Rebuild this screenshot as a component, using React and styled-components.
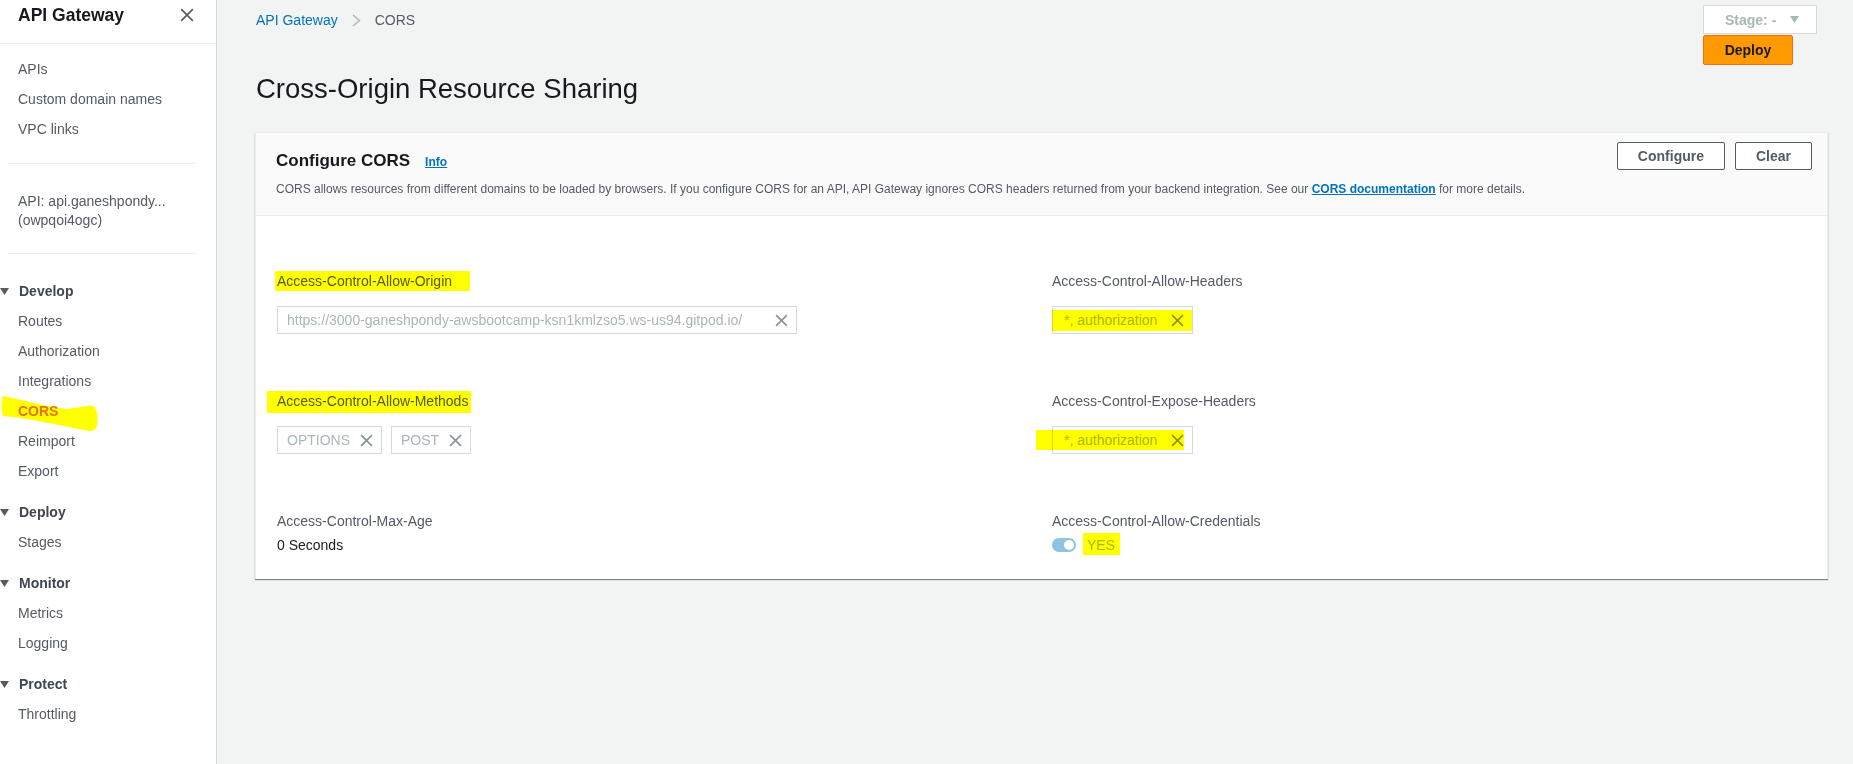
import React from 'react'
import styled, { createGlobalStyle } from 'styled-components'

const GlobalStyle = createGlobalStyle`
  html, body {
    margin: 0;
    padding: 0;
  }
  body {
    font-family: "Liberation Sans", Arial, sans-serif;
    background: #f2f3f3;
    color: #16191f;
  }
`

const Page = styled.div`
  display: flex;
  min-height: 100vh;
`

/* ---------- sidebar ---------- */

const Sidebar = styled.nav`
  width: 216px;
  flex: none;
  background: #fff;
  border-right: 1px solid #d5dbdb;
`

const SideHeader = styled.div`
  height: 44px;
  box-sizing: border-box;
  display: flex;
  justify-content: space-between;
  align-items: flex-start;
  padding: 4px 22px 0 18px;
  border-bottom: 1px solid #eaeded;
`

const SideTitle = styled.h1`
  margin: 0;
  font-size: 17.5px;
  line-height: 22px;
  font-weight: 700;
  color: #16191f;
`

const CloseBtn = styled.span`
  display: flex;
  margin-top: 4px;
`

const NavGroup = styled.div`
  padding-top: 10px;
`

const NavItem = styled.div`
  position: relative;
  line-height: 30px;
  padding-left: 18px;
  font-size: 14px;
  color: ${p => (p.$active ? '#ec7211' : '#545b64')};
  font-weight: ${p => (p.$active ? 700 : 400)};
`

const Divider = styled.div`
  height: 1px;
  background: #eaeded;
  margin: ${p => p.$top}px 20px 0 8px;
`

const ApiName = styled.div`
  margin-top: 28px;
  padding-left: 18px;
  font-size: 14px;
  line-height: 19px;
  color: #545b64;
`

const Sections = styled.div`
  padding-top: 11px;
`

const Section = styled.div`
  margin-top: 11px;
`

const SectionHeader = styled.div`
  display: flex;
  align-items: center;
  line-height: 30px;
  font-size: 14px;
  font-weight: 700;
  color: #414750;

  svg {
    margin: 0 10px 0 0;
  }
`

const Stroke = styled.svg`
  position: absolute;
  left: 0;
  top: 0;
  mix-blend-mode: multiply;
  pointer-events: none;
`

/* ---------- main ---------- */

const Main = styled.main`
  flex: 1;
  padding: 5px 25px 40px 38px;
  min-width: 0;
`

const TopBar = styled.div`
  display: flex;
  justify-content: space-between;
  align-items: flex-start;
`

const Breadcrumb = styled.div`
  display: flex;
  align-items: center;
  padding: 6px 0 0 1px;
  font-size: 14px;
  line-height: 18px;
`

const Crumb = styled.span`
  color: ${p => (p.$link ? '#0073bb' : '#545b64')};
`

const Chevron = styled.span`
  display: flex;
  margin: 0 14px;
`

const Actions = styled.div`
  display: flex;
  flex-direction: column;
  align-items: flex-start;
  margin-right: 11px;
`

const StageSelect = styled.div`
  width: 114px;
  height: 29px;
  box-sizing: border-box;
  display: flex;
  align-items: center;
  justify-content: space-between;
  padding: 0 17px 0 21px;
  background: #fff;
  border: 1px solid #d5dbdb;
  font-size: 14px;
  font-weight: 700;
  color: #aab7b8;
`

const DeployBtn = styled.button`
  width: 90px;
  height: 30px;
  margin-top: 1px;
  background: #ff9900;
  border: 1px solid #ec7211;
  border-radius: 2px;
  font-family: inherit;
  font-size: 14px;
  font-weight: 700;
  color: #16191f;
  padding: 0;
`

const Title = styled.h1`
  margin: 6px 0 0 1px;
  font-size: 27.5px;
  line-height: 36px;
  font-weight: 400;
  color: #16191f;
`

const Card = styled.section`
  margin-top: 25px;
  background: #fff;
  border: 1px solid #eaeded;
  border-bottom: none;
  box-shadow: 0 1px 1px 0 rgba(0, 28, 36, 0.5);
`

const CardHeader = styled.header`
  background: #fafafa;
  border-bottom: 1px solid #eaeded;
  padding: 9px 15px 18px 20px;
`

const TitleRow = styled.div`
  display: flex;
  justify-content: space-between;
  align-items: flex-start;
`

const CardTitle = styled.h2`
  margin: 8px 0 0;
  font-size: 17px;
  line-height: 22px;
  font-weight: 700;
  color: #16191f;
  display: flex;
  align-items: baseline;
`

const InfoLink = styled.a`
  margin-left: 15px;
  font-size: 12px;
  font-weight: 700;
  color: #0073bb;
  text-decoration: underline;
`

const Buttons = styled.div`
  display: flex;
  gap: 10px;
`

const Button = styled.button`
  height: 28px;
  padding: 0 20px;
  background: #fff;
  border: 1px solid #545b64;
  border-radius: 2px;
  font-family: inherit;
  font-size: 14px;
  font-weight: 700;
  color: #545b64;
`

const Description = styled.p`
  margin: 8px 0 0;
  font-size: 12px;
  line-height: 16px;
  color: #545b64;

  a {
    color: #0073bb;
    font-weight: 700;
    text-decoration: underline;
  }
`

const CardBody = styled.div`
  display: grid;
  grid-template-columns: 775px 1fr;
  row-gap: 57px;
  padding: 55px 21px 24px;
`

const Field = styled.div`
  display: flex;
  flex-direction: column;
  align-items: flex-start;
`

const Label = styled.div`
  font-size: 14px;
  line-height: 20px;
  color: #545b64;
`

const Controls = styled.div`
  display: flex;
  gap: 9px;
  margin-top: ${p => p.$gap}px;
`

const Chip = styled.div`
  height: 28px;
  box-sizing: border-box;
  display: flex;
  align-items: center;
  justify-content: space-between;
  gap: 10px;
  padding: 0 8px 0 ${p => p.$pl || 9}px;
  width: ${p => (p.$w ? `${p.$w}px` : 'auto')};
  background: #fff;
  border: 1px solid #d5dbdb;
  font-size: 14px;
  color: #aab7b8;
  white-space: nowrap;
`

const Value = styled.div`
  font-size: 14px;
  line-height: 20px;
  color: #16191f;
`

const ToggleRow = styled.div`
  display: flex;
  align-items: center;
  gap: 11px;
  margin-top: 4px;
  height: 20px;
`

const Toggle = styled.span`
  width: 24px;
  height: 14px;
  border-radius: 7px;
  background: #8fc3e4;
  display: flex;
  align-items: center;
  justify-content: flex-end;
  padding: 0 2px;
  box-sizing: border-box;

  &::after {
    content: '';
    width: 10px;
    height: 10px;
    border-radius: 50%;
    background: #fff;
  }
`

const Muted = styled.span`
  font-size: 14px;
  line-height: 20px;
  color: #aab7b8;
`

/* marker highlight painted over content */
const Mark = styled.span`
  position: relative;
  display: inline-flex;

  &::after {
    content: '';
    position: absolute;
    top: ${p => p.$t || 0}px;
    bottom: ${p => p.$b || 0}px;
    left: ${p => p.$l || 0}px;
    right: ${p => p.$r || 0}px;
    background: #ffff00;
    mix-blend-mode: multiply;
    pointer-events: none;
  }
`

const XIcon = ({ size = 13, color = '#879596', w = 1.5 }) => (
  <svg width={size} height={size} viewBox="0 0 12 12">
    <path d="M1 1 L11 11 M11 1 L1 11" stroke={color} strokeWidth={w} fill="none" />
  </svg>
)

const Caret = ({ color = '#545b64' }) => (
  <svg width="9" height="7" viewBox="0 0 9 7">
    <polygon points="0,0 9,0 4.5,7" fill={color} />
  </svg>
)

const sections = [
  { title: 'Develop', items: ['Routes', 'Authorization', 'Integrations', 'CORS', 'Reimport', 'Export'] },
  { title: 'Deploy', items: ['Stages'] },
  { title: 'Monitor', items: ['Metrics', 'Logging'] },
  { title: 'Protect', items: ['Throttling'] },
]

const App = () => {
  return (
    <Page>
      <GlobalStyle />
      <Sidebar>
        <SideHeader>
          <SideTitle>API Gateway</SideTitle>
          <CloseBtn>
            <XIcon size={14} color="#545b64" w={1.4} />
          </CloseBtn>
        </SideHeader>
        <NavGroup>
          <NavItem>APIs</NavItem>
          <NavItem>Custom domain names</NavItem>
          <NavItem>VPC links</NavItem>
        </NavGroup>
        <Divider $top={19} />
        <ApiName>
          API: api.ganeshpondy...
          <br />
          (owpqoi4ogc)
        </ApiName>
        <Divider $top={23} />
        <Sections>
          {sections.map(s => (
            <Section key={s.title}>
              <SectionHeader>
                <Caret />
                {s.title}
              </SectionHeader>
              {s.items.map(item =>
                item === 'CORS' ? (
                  <NavItem key={item} $active>
                    CORS
                    <Stroke width="100" height="40" viewBox="0 0 100 40">
                      <path
                        d="M3 0 C25 4 45 11 67 13 C78 12 88 9 93 10 C97 12 98 20 97 30 C96 34 93 35 90 35 C60 30 30 22 3 20 C1 15 1 5 3 0 Z"
                        fill="#ffff00"
                      />
                    </Stroke>
                  </NavItem>
                ) : (
                  <NavItem key={item}>{item}</NavItem>
                )
              )}
            </Section>
          ))}
        </Sections>
      </Sidebar>

      <Main>
        <TopBar>
          <Breadcrumb>
            <Crumb $link>API Gateway</Crumb>
            <Chevron>
              <svg width="9" height="13" viewBox="0 0 9 13">
                <path d="M1 1 L7.5 6.5 L1 12" stroke="#aab7b8" strokeWidth="1.5" fill="none" />
              </svg>
            </Chevron>
            <Crumb>CORS</Crumb>
          </Breadcrumb>
          <Actions>
            <StageSelect>
              Stage: -
              <Caret color="#aab7b8" />
            </StageSelect>
            <DeployBtn>Deploy</DeployBtn>
          </Actions>
        </TopBar>

        <Title>Cross-Origin Resource Sharing</Title>

        <Card>
          <CardHeader>
            <TitleRow>
              <CardTitle>
                Configure CORS
                <InfoLink>Info</InfoLink>
              </CardTitle>
              <Buttons>
                <Button>Configure</Button>
                <Button>Clear</Button>
              </Buttons>
            </TitleRow>
            <Description>
              CORS allows resources from different domains to be loaded by browsers. If you configure CORS for an API,
              API Gateway ignores CORS headers returned from your backend integration. See our{' '}
              <a>CORS documentation</a> for more details.
            </Description>
          </CardHeader>

          <CardBody>
            <Field>
              <Mark $l={-2} $r={-18}>
                <Label>Access-Control-Allow-Origin</Label>
              </Mark>
              <Controls $gap={15}>
                <Chip $w={520}>
                  https://3000-ganeshpondy-awsbootcamp-ksn1kmlzso5.ws-us94.gitpod.io/
                  <XIcon />
                </Chip>
              </Controls>
            </Field>
            <Field>
              <Label>Access-Control-Allow-Headers</Label>
              <Controls $gap={15}>
                <Mark $t={4} $b={3} $r={1}>
                  <Chip $w={141} $pl={11}>
                    *, authorization
                    <XIcon />
                  </Chip>
                </Mark>
              </Controls>
            </Field>

            <Field>
              <Mark $l={-10} $r={-3} $b={-2}>
                <Label>Access-Control-Allow-Methods</Label>
              </Mark>
              <Controls $gap={15}>
                <Chip>
                  OPTIONS
                  <XIcon />
                </Chip>
                <Chip>
                  POST
                  <XIcon />
                </Chip>
              </Controls>
            </Field>
            <Field>
              <Label>Access-Control-Expose-Headers</Label>
              <Controls $gap={15}>
                <Mark $t={4} $b={4} $l={-16} $r={9}>
                  <Chip $w={141} $pl={11}>
                    *, authorization
                    <XIcon />
                  </Chip>
                </Mark>
              </Controls>
            </Field>

            <Field>
              <Label>Access-Control-Max-Age</Label>
              <Controls $gap={4}>
                <Value>0 Seconds</Value>
              </Controls>
            </Field>
            <Field>
              <Label>Access-Control-Allow-Credentials</Label>
              <ToggleRow>
                <Toggle />
                <Mark $l={-4} $r={-5} $t={-2}>
                  <Muted>YES</Muted>
                </Mark>
              </ToggleRow>
            </Field>
          </CardBody>
        </Card>
      </Main>
    </Page>
  )
}

export default App
